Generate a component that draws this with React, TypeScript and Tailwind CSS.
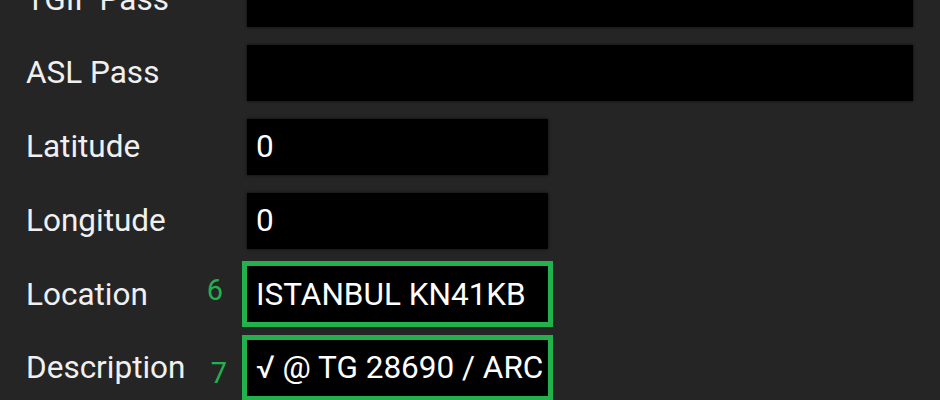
import React from "react";

type Row = {
  label: string;
  value: string;
  wide?: boolean;
  mark?: string;
};

const rows: Row[] = [
  { label: "TGIF Pass", value: "", wide: true },
  { label: "ASL Pass", value: "", wide: true },
  { label: "Latitude", value: "0" },
  { label: "Longitude", value: "0" },
  { label: "Location", value: "ISTANBUL KN41KB", mark: "6" },
  { label: "Description", value: "√ @ TG 28690 / ARC", mark: "7" },
];

export default function App() {
  return (
    <div
      className="w-[940px] h-[400px] overflow-hidden bg-[#252525] text-[#f0f0f0]"
      style={{ fontFamily: "Roboto, 'Liberation Sans', sans-serif" }}
    >
      <div className="flex flex-col gap-[17.75px] mt-[-28.75px]">
        {rows.map((r) => (
          <div key={r.label} className="flex items-center h-[56px]">
            <div className="w-[247px] shrink-0 pl-[26px] text-[31.5px] leading-none">
              {r.label}
            </div>
            <div
              className={
                "relative h-[56px] flex items-center pl-[9px] pr-[6px] bg-black text-[31.5px] leading-none text-white shadow-[0_0_3px_rgba(0,0,0,0.7)] " +
                (r.wide ? "w-[666px]" : "w-[301px]") +
                (r.mark ? " outline-[5px] outline-solid outline-[#22b14c]" : "")
              }
            >
              {r.mark === "6" && (
                <span className="absolute right-[calc(100%+24px)] top-[10px] text-[29px] leading-none text-[#22b14c]">
                  6
                </span>
              )}
              {r.mark === "7" && (
                <span className="absolute right-[calc(100%+20px)] top-[19px] text-[29px] leading-none text-[#22b14c]">
                  7
                </span>
              )}
              <span className="whitespace-nowrap">{r.value}</span>
            </div>
          </div>
        ))}
      </div>
    </div>
  );
}
